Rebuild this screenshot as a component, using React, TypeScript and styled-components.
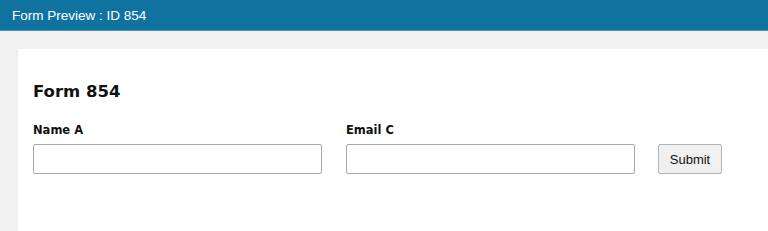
import React from 'react';
import styled, { createGlobalStyle } from 'styled-components';

const HEADER_BLUE = '#10739f';
const PAGE_GRAY = '#f0f0f0';
const BORDER = '#a9a9a9';

const GlobalStyle = createGlobalStyle`
    html, body {
        margin: 0;
        padding: 0;
        background: ${PAGE_GRAY};
        height: 100%;
        overflow: hidden;
    }
    #root { height: 100%; }
`;

const Page = styled.div`
    display: flex;
    flex-direction: column;
    height: 231px;
`;

const Header = styled.header`
    height: 31px;
    background: ${HEADER_BLUE};
    color: #fff;
    font-family: "Liberation Sans", Arial, sans-serif;
    font-size: 13.5px;
    display: flex;
    align-items: center;
    padding: 0 12px;
    box-sizing: border-box;
    border-bottom: 1px solid #4a95bb;
`;

const Body = styled.main`
    flex: 1;
    padding: 18px 0 0 18px;
`;

const Card = styled.section`
    background: #fff;
    height: 100%;
    padding: 33px 15px 0;
    box-sizing: border-box;
`;

const Title = styled.h2`
    margin: 0 0 21px;
    font-family: "DejaVu Sans", Verdana, sans-serif;
    font-size: 16.5px;
    font-weight: bold;
    color: #111;
    line-height: 20px;
`;

const Row = styled.div`
    display: flex;
    align-items: flex-end;
    gap: 24px;
`;

const Field = styled.div`
    display: flex;
    flex-direction: column;
    gap: 6px;
`;

const Label = styled.label`
    font-family: "DejaVu Sans", Verdana, sans-serif;
    font-size: 11.5px;
    font-weight: bold;
    color: #111;
    line-height: 15px;
`;

const Input = styled.input`
    width: 289px;
    height: 30px;
    box-sizing: border-box;
    border: 1px solid ${BORDER};
    border-radius: 2px;
    background: #fff;
    outline: none;
`;

const SubmitButton = styled.button`
    width: 64px;
    height: 30px;
    margin-left: -1px;
    box-sizing: border-box;
    border: 1px solid #b4b4b4;
    border-radius: 2px;
    background: #f0f0f0;
    font-family: "Liberation Sans", Arial, sans-serif;
    font-size: 13px;
    color: #111;
`;

export default function App() {
    return (
        <>
            <GlobalStyle />
            <Page>
                <Header>Form Preview : ID 854</Header>
                <Body>
                    <Card>
                        <Title>Form 854</Title>
                        <Row>
                            <Field>
                                <Label>Name A</Label>
                                <Input type="text" />
                            </Field>
                            <Field>
                                <Label>Email C</Label>
                                <Input type="email" />
                            </Field>
                            <SubmitButton type="submit">Submit</SubmitButton>
                        </Row>
                    </Card>
                </Body>
            </Page>
        </>
    );
}
